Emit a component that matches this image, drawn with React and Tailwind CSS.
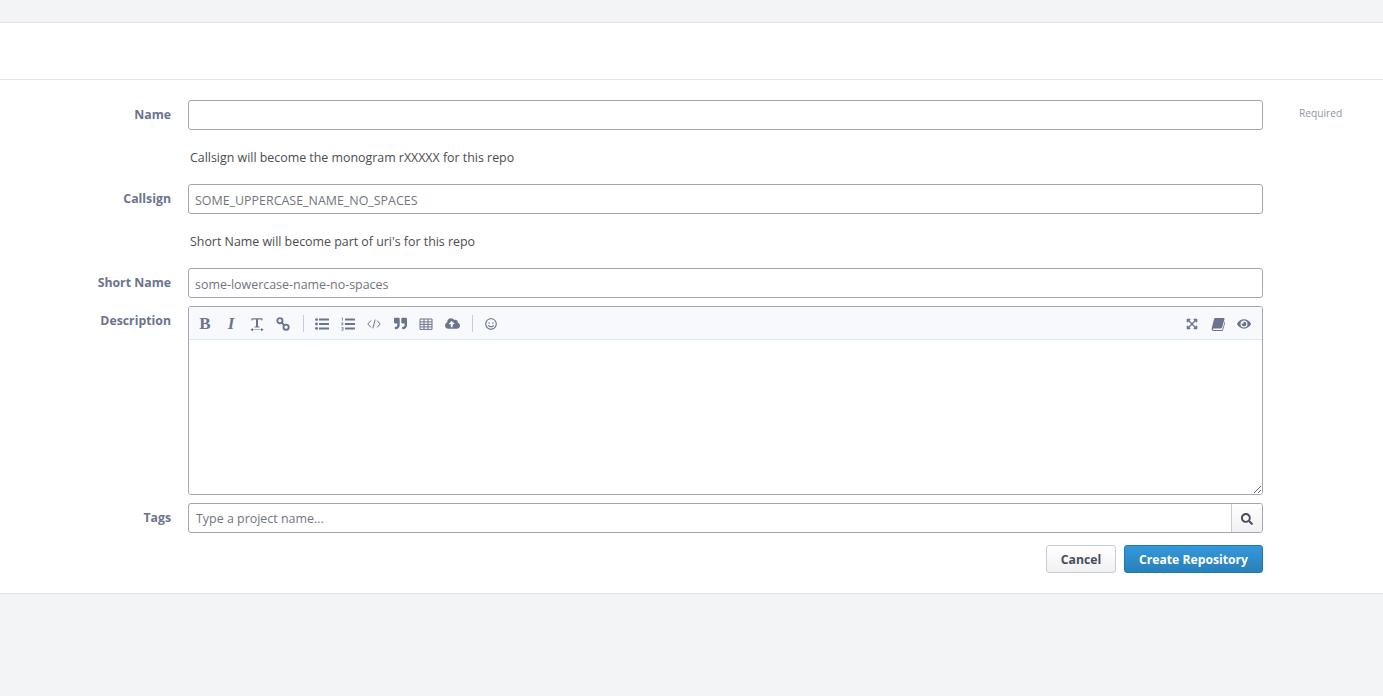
import {
  FaQuoteRight,
  FaCloudUploadAlt,
  FaRegSmile,
  FaExpandArrowsAlt,
  FaEye,
  FaSearch,
} from "react-icons/fa"

const font = "font-['Open_Sans','Noto_Sans',sans-serif]"

const Row = ({ label, children, side }) => (
  <div className="grid grid-cols-[171px_1075px_1fr]">
    <div className="pt-[5px] text-right text-[12.3px] leading-[20px] font-bold text-[#6b748c]">
      {label}
    </div>
    <div className="ml-[17px] w-[1075px]">{children}</div>
    <div className="ml-[53px] pt-[4px] text-[10.2px] leading-[18px] text-[#8f96a8]">
      {side}
    </div>
  </div>
)

const Note = ({ children }) => (
  <div className="ml-[190px] h-[54px] pt-[18px] text-[12.4px] leading-[20px] text-[#4b4d51]">
    {children}
  </div>
)

const TextBox = ({ placeholder }) => (
  <input
    type="text"
    placeholder={placeholder}
    className="block h-[30px] w-full rounded-[3px] border border-[#a1a6b0] bg-white px-[6px] pt-[3px] text-[12.45px] text-[#71757f] outline-none placeholder:text-[#71757f]"
  />
)

const Tool = ({ children }) => (
  <span className="flex h-[16px] w-[26px] items-center justify-center text-[#6b748c]">
    {children}
  </span>
)

const Svg = ({ children, size = 14 }) => (
  <svg width={size} height={size} viewBox="0 0 14 14" fill="currentColor">
    {children}
  </svg>
)

const TextWidthIcon = () => (
  <Svg>
    <path d="M1.5 3.5V1.2h11v2.3h-.8l-.5-1H8v7h1.4v1H4.6v-1H6v-7H2.8l-.5 1z" />
    <path d="M.8 12.4h12.4v.7H.8z" />
    <path d="M3 10.9v3.7L.5 12.75zM11 10.9v3.7l2.5-1.85z" />
  </Svg>
)

const LinkIcon = () => (
  <Svg>
    <g fill="none" stroke="currentColor" strokeWidth="1.9">
      <circle cx="3.9" cy="3.7" r="2.6" />
      <circle cx="10.1" cy="10.2" r="2.6" />
      <path d="M5.6 5.5l2.8 2.9" />
    </g>
  </Svg>
)

const ListUlIcon = () => (
  <Svg>
    <circle cx="1.5" cy="2.6" r="1.4" />
    <circle cx="1.5" cy="7" r="1.4" />
    <circle cx="1.5" cy="11.4" r="1.4" />
    <rect x="4" y="1.6" width="10" height="2" rx=".3" />
    <rect x="4" y="6" width="10" height="2" rx=".3" />
    <rect x="4" y="10.4" width="10" height="2" rx=".3" />
  </Svg>
)

const ListOlIcon = () => (
  <Svg>
    <path d="M.6 .8h1.2v3h-.7V1.5H.6zM.3 5.6h2.1v.7L1.2 7.6h1.2v.6H.3v-.6l1.3-1.4H.3zM.3 10h2.1v3.4H.3v-.6h1.4v-.7H.8v-.5h.9v-1H.3z" />
    <rect x="4" y="1.6" width="10" height="2" rx=".3" />
    <rect x="4" y="6" width="10" height="2" rx=".3" />
    <rect x="4" y="10.4" width="10" height="2" rx=".3" />
  </Svg>
)

const CodeIcon = () => (
  <Svg>
    <path
      d="M3.9 3.6L.8 7l3.1 3.4M10.1 3.6L13.2 7l-3.1 3.4M8.2 2.6L5.8 11.4"
      fill="none"
      stroke="currentColor"
      strokeWidth="1"
    />
  </Svg>
)

const TableIcon = () => (
  <Svg>
    <path
      d="M1 2h12v10.4H1zM1 4.9h12M1 7.4h12M1 9.9h12M5 2v10.4M9 2v10.4"
      fill="none"
      stroke="currentColor"
      strokeWidth="1"
    />
  </Svg>
)

const BookIcon = () => (
  <Svg>
    <path d="M4.6 1h8.2c.6 0 .9.5.7 1l-2.4 8.4c-.2.7-.7 1-1.4 1H2.6c-.5 0-.9.5-.8.9.1.4.5.7 1 .7h7.9c.3 0 .6-.2.7-.5l2.4-8.2.6.4-2.3 8.2c-.2.7-.8 1.1-1.5 1.1H2.6c-1.2 0-2.2-1-2-2.3L3 2.2C3.2 1.5 3.8 1 4.6 1z" />
  </Svg>
)

const Divider = () => <span className="mr-[5px] ml-[7px] h-[17px] w-px bg-[#c7ccd9]" />

export default function App() {
  return (
    <div className={`flex min-h-[696px] flex-col bg-[#f3f4f6] ${font}`}>
      <div className="h-[22px]" />
      <div className="h-[572px] border-y border-[#e1e3e8] bg-white">
        <div className="h-[57px] border-b border-[#e4e6ea]" />
        <form className="pt-[20px]">
          <Row label="Name" side="Required">
            <TextBox />
          </Row>
          <Note>Callsign will become the monogram rXXXXX for this repo</Note>
          <Row label="Callsign">
            <TextBox placeholder="SOME_UPPERCASE_NAME_NO_SPACES" />
          </Row>
          <Note>Short Name will become part of uri's for this repo</Note>
          <Row label="Short Name">
            <TextBox placeholder="some-lowercase-name-no-spaces" />
          </Row>

          <div className="mt-[8px]">
            <Row label="Description">
              <div className="h-[189px] overflow-hidden rounded-[3px] border border-[#a1a6b0]">
                <div className="flex h-[33px] items-center justify-between border-b border-[#dde8ef] bg-[#f7f9fd] pt-[1px] pr-[5px] pl-[3px]">
                  <div className="flex items-center">
                    <Tool>
                      <span className="font-['Liberation_Serif',serif] text-[17px] leading-none font-bold">B</span>
                    </Tool>
                    <Tool>
                      <span className="font-['Liberation_Serif',serif] text-[17px] leading-none font-bold italic">I</span>
                    </Tool>
                    <Tool><TextWidthIcon /></Tool>
                    <Tool><LinkIcon /></Tool>
                    <Divider />
                    <Tool><ListUlIcon /></Tool>
                    <Tool><ListOlIcon /></Tool>
                    <Tool><CodeIcon /></Tool>
                    <Tool><FaQuoteRight size={13} /></Tool>
                    <Tool><TableIcon /></Tool>
                    <Tool><FaCloudUploadAlt size={15} /></Tool>
                    <Divider />
                    <Tool><FaRegSmile size={12} /></Tool>
                  </div>
                  <div className="flex items-center">
                    <Tool><FaExpandArrowsAlt size={12} /></Tool>
                    <Tool><BookIcon /></Tool>
                    <Tool><FaEye size={14} /></Tool>
                  </div>
                </div>
                <textarea className="block h-[154px] w-full resize-y bg-white outline-none" />
              </div>
            </Row>
          </div>

          <div className="mt-[8px]">
            <Row label="Tags">
              <div className="flex h-[30px] overflow-hidden rounded-[3px] border border-[#a1a6b0] bg-white">
                <input
                  type="text"
                  placeholder="Type a project name..."
                  className="min-w-0 flex-1 px-[7px] pt-[3px] text-[12.45px] text-[#71757f] outline-none placeholder:text-[#71757f]"
                />
                <button
                  type="button"
                  className="flex w-[31px] items-center justify-center border-l border-[#c7ccd9] bg-gradient-to-b from-white to-[#f1f1f3] pt-[1px] text-[#464c5c]"
                >
                  <FaSearch size={12} />
                </button>
              </div>
            </Row>
          </div>

          <div className="mt-[12px] ml-[188px] flex w-[1075px] justify-end gap-[8px]">
            <button
              type="button"
              className="h-[28px] w-[70px] rounded-[3px] border border-[#c7ccd9] bg-gradient-to-b from-white to-[#f1f1f3] pt-[3px] text-[12.2px] font-bold text-[#464c5c]"
            >
              Cancel
            </button>
            <button
              type="button"
              className="h-[28px] w-[139px] rounded-[3px] border border-[#1e78b6] bg-gradient-to-b from-[#3498db] to-[#2980b9] pt-[3px] text-[12.2px] font-bold text-white"
            >
              Create Repository
            </button>
          </div>
        </form>
      </div>
      <div className="flex-1" />
    </div>
  )
}
